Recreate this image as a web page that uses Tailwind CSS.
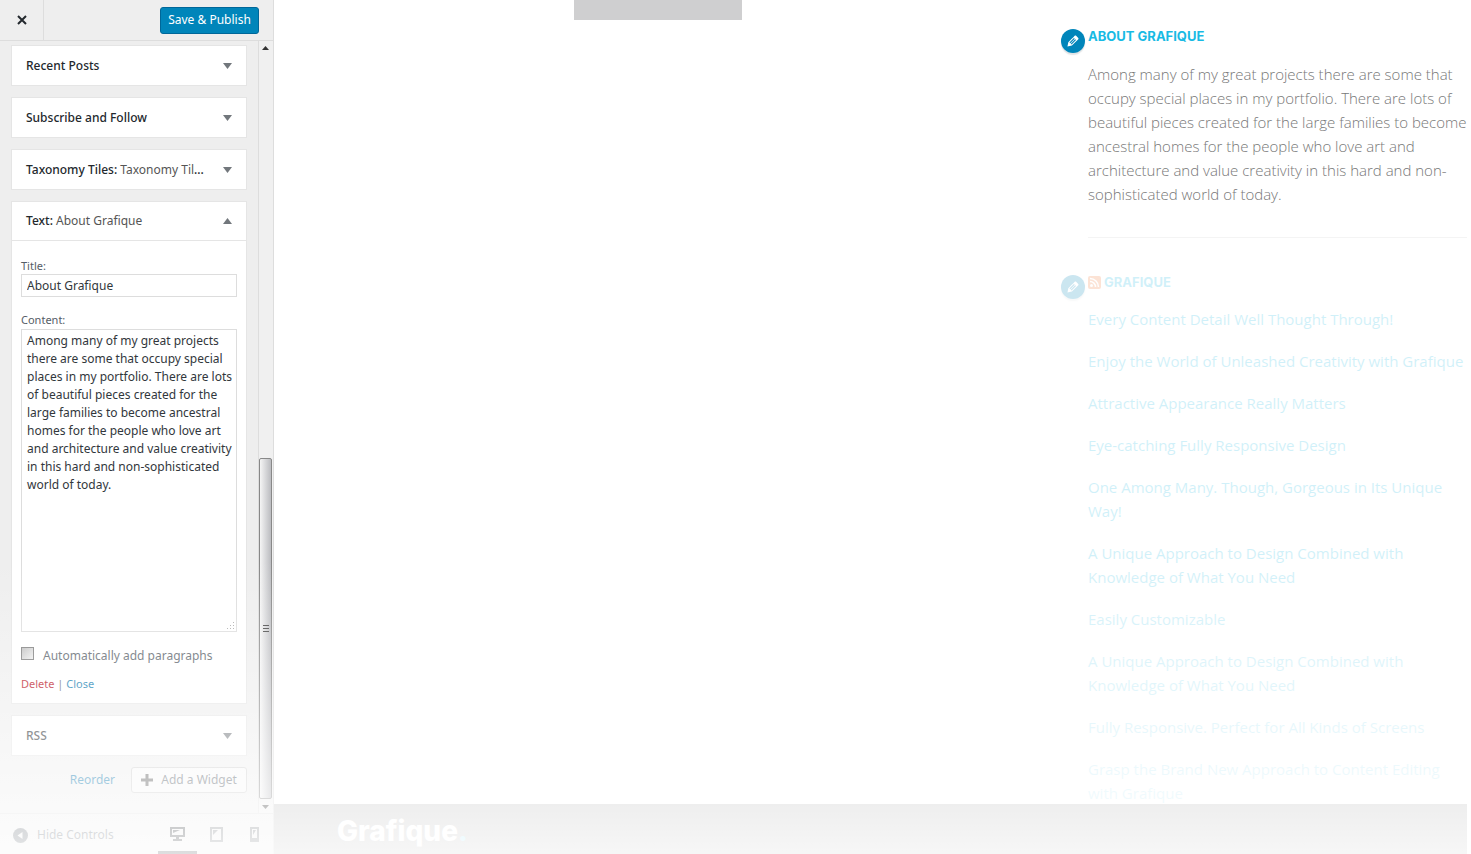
<!DOCTYPE html>
<html lang="en">
  <head>
    <meta charset="UTF-8" />
    <meta name="viewport" content="width=device-width, initial-scale=1.0" />
    <title>Customize: Grafique</title>
    <script src="https://cdn.jsdelivr.net/npm/@tailwindcss/browser@4"></script>
  </head>
  <body class="relative flex h-screen overflow-hidden bg-white font-['Noto_Sans',sans-serif] text-[12px] text-[#555d66]">
    <!-- Customizer panel -->
    <aside class="flex w-[274px] shrink-0 flex-col border-r border-[#ddd] bg-[#eee]">
      <header class="flex h-[41px] shrink-0 items-center justify-between border-b border-[#ddd] pr-[14px]">
        <button type="button" aria-label="Close" class="flex h-full w-11 items-center justify-center border-r border-[#ddd]">
          <svg class="size-[10px]" viewBox="0 0 10 10" stroke="#23282d" stroke-width="2"><path d="M1 1l8 8M9 1l-8 8" /></svg>
        </button>
        <button type="button" class="h-[27px] w-[99px] rounded-[3px] border border-[#006799] bg-[#0085ba] text-white">Save &amp; Publish</button>
      </header>

      <div class="flex min-h-0 flex-1">
        <div class="flex min-w-0 flex-1 flex-col gap-[11px] overflow-hidden pt-1 pr-[11px] pl-[11px]">
          <button type="button" class="flex h-[41px] shrink-0 items-center justify-between border border-[#e5e5e5] bg-white px-[14px] font-medium text-[#23282d]">
            Recent Posts
            <svg class="h-[6px] w-[9px]" viewBox="0 0 9 6" fill="#72777c"><path d="M0 0h9L4.500 6z" /></svg>
          </button>
          <button type="button" class="flex h-[41px] shrink-0 items-center justify-between border border-[#e5e5e5] bg-white px-[14px] font-medium text-[#23282d]">
            Subscribe and Follow
            <svg class="h-[6px] w-[9px]" viewBox="0 0 9 6" fill="#72777c"><path d="M0 0h9L4.500 6z" /></svg>
          </button>
          <button type="button" class="flex h-[41px] shrink-0 items-center justify-between border border-[#e5e5e5] bg-white px-[14px] font-medium text-[#23282d]">
            <span>Taxonomy Tiles: <span class="font-normal text-[#555]">Taxonomy Til</span>...</span>
            <svg class="h-[6px] w-[9px]" viewBox="0 0 9 6" fill="#72777c"><path d="M0 0h9L4.500 6z" /></svg>
          </button>

          <div class="shrink-0 border border-[#e5e5e5] bg-white">
            <button type="button" class="flex h-[38px] w-full items-center justify-between px-[14px] font-medium text-[#23282d]">
              <span>Text: <span class="font-normal text-[#555]">About Grafique</span></span>
              <svg class="h-[6px] w-[9px]" viewBox="0 0 9 6" fill="#72777c"><path d="M0 6h9L4.500 0z" /></svg>
            </button>
            <form class="flex flex-col border-t border-[#e5e5e5] px-[9px] pt-4 pb-[9px]">
              <label for="title" class="text-[11px] leading-[17px]">Title:</label>
              <input id="title" value="About Grafique" class="h-[23px] border border-[#ddd] px-[5px] text-[#32373c]" />
              <label for="content" class="mt-[14px] text-[11px] leading-[18px]">Content:</label>
              <textarea id="content" class="h-[303px] resize-none overflow-hidden border border-[#ddd] py-[2px] pl-[5px] leading-[18px] whitespace-pre text-[#32373c]">Among many of my great projects
there are some that occupy special
places in my portfolio. There are lots
of beautiful pieces created for the
large families to become ancestral
homes for the people who love art
and architecture and value creativity
in this hard and non-sophisticated
world of today.</textarea>
              <div class="relative">
                <svg class="absolute right-[2px] bottom-[2px] size-2" viewBox="0 0 8 8" fill="#aaa"><path d="M6 0h1v1H6zM3 3h1v1H3zM6 3h1v1H6zM0 6h1v1H0zM3 6h1v1H3zM6 6h1v1H6z" /></svg>
              </div>
              <div class="mt-[14px] flex h-5 gap-[9px]">
                <input id="autop" type="checkbox" class="mt-[1px] size-[13px] appearance-none border border-[#777] bg-linear-to-br from-[#bbb] to-[#eee]" />
                <label for="autop" class="leading-5">Automatically add paragraphs</label>
              </div>
              <p class="mt-2 text-[11px] leading-5"><a href="#" class="text-[#b4000f]">Delete</a> | <a href="#" class="text-[#0073aa]">Close</a></p>
            </form>
          </div>

          <button type="button" class="flex h-[41px] shrink-0 items-center justify-between border border-[#e5e5e5] bg-white px-[14px] font-medium text-[#23282d]">
            RSS
            <svg class="h-[6px] w-[9px]" viewBox="0 0 9 6" fill="#72777c"><path d="M0 0h9L4.500 6z" /></svg>
          </button>

          <div class="flex shrink-0 items-center justify-end gap-4">
            <a href="#" class="text-[#0073aa]">Reorder</a>
            <button type="button" class="flex h-[26px] w-[116px] items-center justify-center gap-2 rounded-[3px] border border-[#ccc] bg-[#f7f7f7]">
              <svg class="size-3" viewBox="0 0 12 12" stroke="#555" stroke-width="3"><path d="M6 0v12M0 6h12" /></svg>
              Add a Widget
            </button>
          </div>
        </div>

        <!-- Scrollbar -->
        <div class="flex w-[15px] shrink-0 flex-col items-start border-l border-[#ddd] bg-[#f0f0f0] pt-[5px] pb-1">
          <svg class="ml-[3px] h-[4px] w-[7px]" viewBox="0 0 7 4" fill="#333"><path d="M0 4h7L3.500 0z" /></svg>
          <div class="flex-1"></div>
          <div class="flex h-[341px] w-[13px] items-center justify-center rounded-[2px] border border-[#888] bg-linear-to-r from-[#f5f5f5] to-[#bbbcc0]">
            <svg class="h-[7px] w-[6px]" viewBox="0 0 6 7" stroke="#444"><path d="M0 .5h6M0 3.500h6M0 6.500h6" /></svg>
          </div>
          <svg class="mt-[6px] ml-[3px] h-[4px] w-[7px]" viewBox="0 0 7 4" fill="#333"><path d="M0 0h7L3.500 4z" /></svg>
        </div>
      </div>

      <footer class="flex h-[41px] shrink-0 items-center border-t border-[#ddd] pl-[13px]">
        <button type="button" class="flex items-center gap-[9px] pt-[2px]">
          <svg class="size-[15px]" viewBox="0 0 15 15"><circle cx="7.500" cy="7.500" r="7.500" fill="#555d66" /><path d="M9.500 4v7L4.500 7.500z" fill="#eee" /></svg>
          Hide Controls
        </button>
        <div class="ml-auto flex h-full">
          <button type="button" aria-label="Desktop" class="flex w-[39px] items-center justify-center border-b-[3px] border-[#23282d] pt-1">
            <svg class="h-[15px] w-[15px]" viewBox="0 0 15 15" fill="#23282d"><path fill-rule="evenodd" d="M0 0h15v10H9v2h3v2H3v-2h3v-2H0zM2 2v6h11V2z" /><path d="M3 3h7L3 6z" /></svg>
          </button>
          <button type="button" aria-label="Tablet" class="flex w-[38px] items-center justify-center border-b-[3px] border-transparent pt-1">
            <svg class="h-[15px] w-[13px]" viewBox="0 0 13 15" fill="#72777c"><path fill-rule="evenodd" d="M0 0h13v15H0zM2 2v11h9V2z" /><path d="M3 3h5L3 8z" /></svg>
          </button>
          <button type="button" aria-label="Mobile" class="flex w-[38px] items-center justify-center border-b-[3px] border-transparent pt-1">
            <svg class="h-[15px] w-[9px]" viewBox="0 0 9 15" fill="#72777c"><path fill-rule="evenodd" d="M0 0h9v15H0zM2 2v9h5V2z" /><path d="M3 3h3L3 8z" /></svg>
          </button>
        </div>
      </footer>
    </aside>

    <!-- Site preview -->
    <main class="mr-1 flex min-w-0 flex-1 flex-col">
      <div class="flex min-h-0 flex-1 justify-between overflow-hidden">
        <div class="ml-[300px] h-5 w-[168px] bg-[#cfcfd0]"></div>
        <div class="w-[406px] font-['Open_Sans',sans-serif]">
          <section class="flex gap-[3px] pt-6">
            <button type="button" aria-label="Edit About Grafique" class="mt-[5px] flex size-6 shrink-0 items-center justify-center rounded-full bg-[#0085ba] shadow-[0_2px_1px_rgba(46,68,83,0.15)]">
              <svg class="size-4" viewBox="0 0 20 20" fill="#fff"><path d="M13.890 3.390l2.710 2.720c.46.46.42 1.240.03 1.640l-8.010 8.020-5.560 1.160 1.160-5.580s7.600-7.630 7.990-8.030c.39-.39 1.220-.39 1.680.07zm-2.730 2.790l-5.590 5.610 1.110 1.110 5.540-5.650zm-2.970 8.230l5.580-5.600-1.070-1.080-5.590 5.600z" /></svg>
            </button>
            <div class="min-w-0 flex-1">
              <h2 class="font-['Inter',sans-serif] text-[13px] leading-6 font-bold whitespace-nowrap text-[#18bae4]">ABOUT GRAFIQUE</h2>
              <p class="mt-[14px] text-[15px] leading-6 font-light whitespace-nowrap text-[#777]">
                Among many of my great projects there are some that<br />
                occupy special places in my portfolio. There are lots of<br />
                beautiful pieces created for the large families to become<br />
                ancestral homes for the people who love art and<br />
                architecture and value creativity in this hard and non-<br />
                sophisticated world of today.
              </p>
              <hr class="mt-[31px] border-[#f4f4f4]" />
            </div>
          </section>
          <section class="flex gap-[3px] pt-8 opacity-20">
            <button type="button" aria-label="Edit Grafique feed" class="mt-[5px] flex size-6 shrink-0 items-center justify-center rounded-full bg-[#0085ba] shadow-[0_2px_1px_rgba(46,68,83,0.15)]">
              <svg class="size-4" viewBox="0 0 20 20" fill="#fff"><path d="M13.890 3.390l2.710 2.720c.46.46.42 1.240.03 1.640l-8.010 8.020-5.560 1.160 1.160-5.580s7.600-7.630 7.990-8.030c.39-.39 1.220-.39 1.680.07zm-2.730 2.790l-5.590 5.610 1.110 1.110 5.540-5.650zm-2.970 8.230l5.580-5.600-1.070-1.080-5.590 5.600z" /></svg>
            </button>
            <div class="min-w-0 flex-1 text-[#18bae4]">
              <h2 class="flex items-center gap-[3px] font-['Inter',sans-serif] text-[13px] leading-6 font-bold">
                <svg class="size-[13px]" viewBox="0 0 13 13"><rect width="13" height="13" rx="2" fill="#f27935" /><circle cx="3.500" cy="9.500" r="1.500" fill="#fff" /><path d="M2 5.500a5.500 5.500 0 0 1 5.500 5.500M2 2.500a8.500 8.500 0 0 1 8.500 8.500" fill="none" stroke="#fff" stroke-width="1.500" /></svg>
                GRAFIQUE
              </h2>
              <ul class="mt-[13px] flex flex-col gap-[18px] text-[15px] leading-6 font-medium whitespace-nowrap">
                <li><a href="#">Every Content Detail Well Thought Through!</a></li>
                <li><a href="#">Enjoy the World of Unleashed Creativity with Grafique</a></li>
                <li><a href="#">Attractive Appearance Really Matters</a></li>
                <li><a href="#">Eye-catching Fully Responsive Design</a></li>
                <li><a href="#">One Among Many. Though, Gorgeous in Its Unique<br />Way!</a></li>
                <li><a href="#">A Unique Approach to Design Combined with<br />Knowledge of What You Need</a></li>
                <li><a href="#">Easily Customizable</a></li>
                <li><a href="#">A Unique Approach to Design Combined with<br />Knowledge of What You Need</a></li>
                <li><a href="#">Fully Responsive. Perfect for All Kinds of Screens</a></li>
                <li><a href="#">Grasp the Brand New Approach to Content Editing<br />with Grafique</a></li>
              </ul>
            </div>
          </section>
        </div>
      </div>
      <footer class="flex h-[50px] shrink-0 items-center bg-[#c6c6c6] pl-[63px]">
        <a href="#" class="pt-1 font-['Inter',sans-serif] text-[28px] font-extrabold text-white">Grafique<span class="text-[#b5ecfa]">.</span></a>
      </footer>
    </main>

    <!-- Fade towards the bottom edge -->
    <div class="pointer-events-none absolute inset-x-0 bottom-0 h-[294px] bg-linear-to-b from-white/0 to-white/85"></div>
  </body>
</html>
